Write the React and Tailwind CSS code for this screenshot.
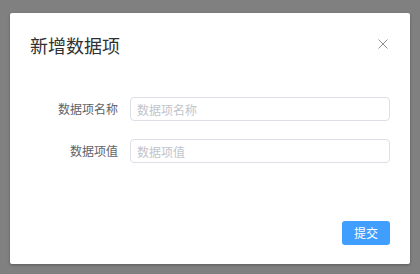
export default function App() {
  const font = { fontFamily: '"Noto Sans CJK SC", "Noto Sans", sans-serif' };
  return (
    <div className="w-[420px] h-[274px] bg-[#808080] pl-[10px] pt-[13px] overflow-hidden" style={font}>
      <div className="w-[400px] h-[251px] bg-white rounded-[2px] shadow-[0_1px_3px_rgba(0,0,0,0.3)] flex flex-col">
        <div className="flex items-start justify-between pt-[20px] px-[20px] pb-[10px]">
          <span className="text-[18px] leading-[24px] text-[#303133]">新增数据项</span>
          <button className="mt-[6px] mr-[2px] w-[10px] h-[10px] flex items-center justify-center">
            <svg width="10" height="10" viewBox="0 0 10 10">
              <path d="M0.5 0.5 L9.5 9.5 M9.5 0.5 L0.5 9.5" stroke="#909399" strokeWidth="1" fill="none" />
            </svg>
          </button>
        </div>
        <div className="pt-[30px] px-[20px] flex flex-col gap-[18px]">
          <div className="flex items-center">
            <label className="w-[100px] pr-[12px] text-right text-[12px] text-[#606266] leading-[24px]">数据项名称</label>
            <input
              className="flex-1 h-[24px] border border-[#dcdfe6] rounded-[4px] px-[6px] text-[12px] text-[#606266] placeholder:text-[#c0c4cc] outline-none"
              placeholder="数据项名称"
            />
          </div>
          <div className="flex items-center">
            <label className="w-[100px] pr-[12px] text-right text-[12px] text-[#606266] leading-[24px]">数据项值</label>
            <input
              className="flex-1 h-[24px] border border-[#dcdfe6] rounded-[4px] px-[6px] text-[12px] text-[#606266] placeholder:text-[#c0c4cc] outline-none"
              placeholder="数据项值"
            />
          </div>
        </div>
        <div className="mt-auto flex justify-end px-[20px] pb-[19px]">
          <button className="w-[48px] h-[24px] bg-[#409eff] rounded-[3px] text-white text-[12px] flex items-center justify-center">提交</button>
        </div>
      </div>
    </div>
  );
}
